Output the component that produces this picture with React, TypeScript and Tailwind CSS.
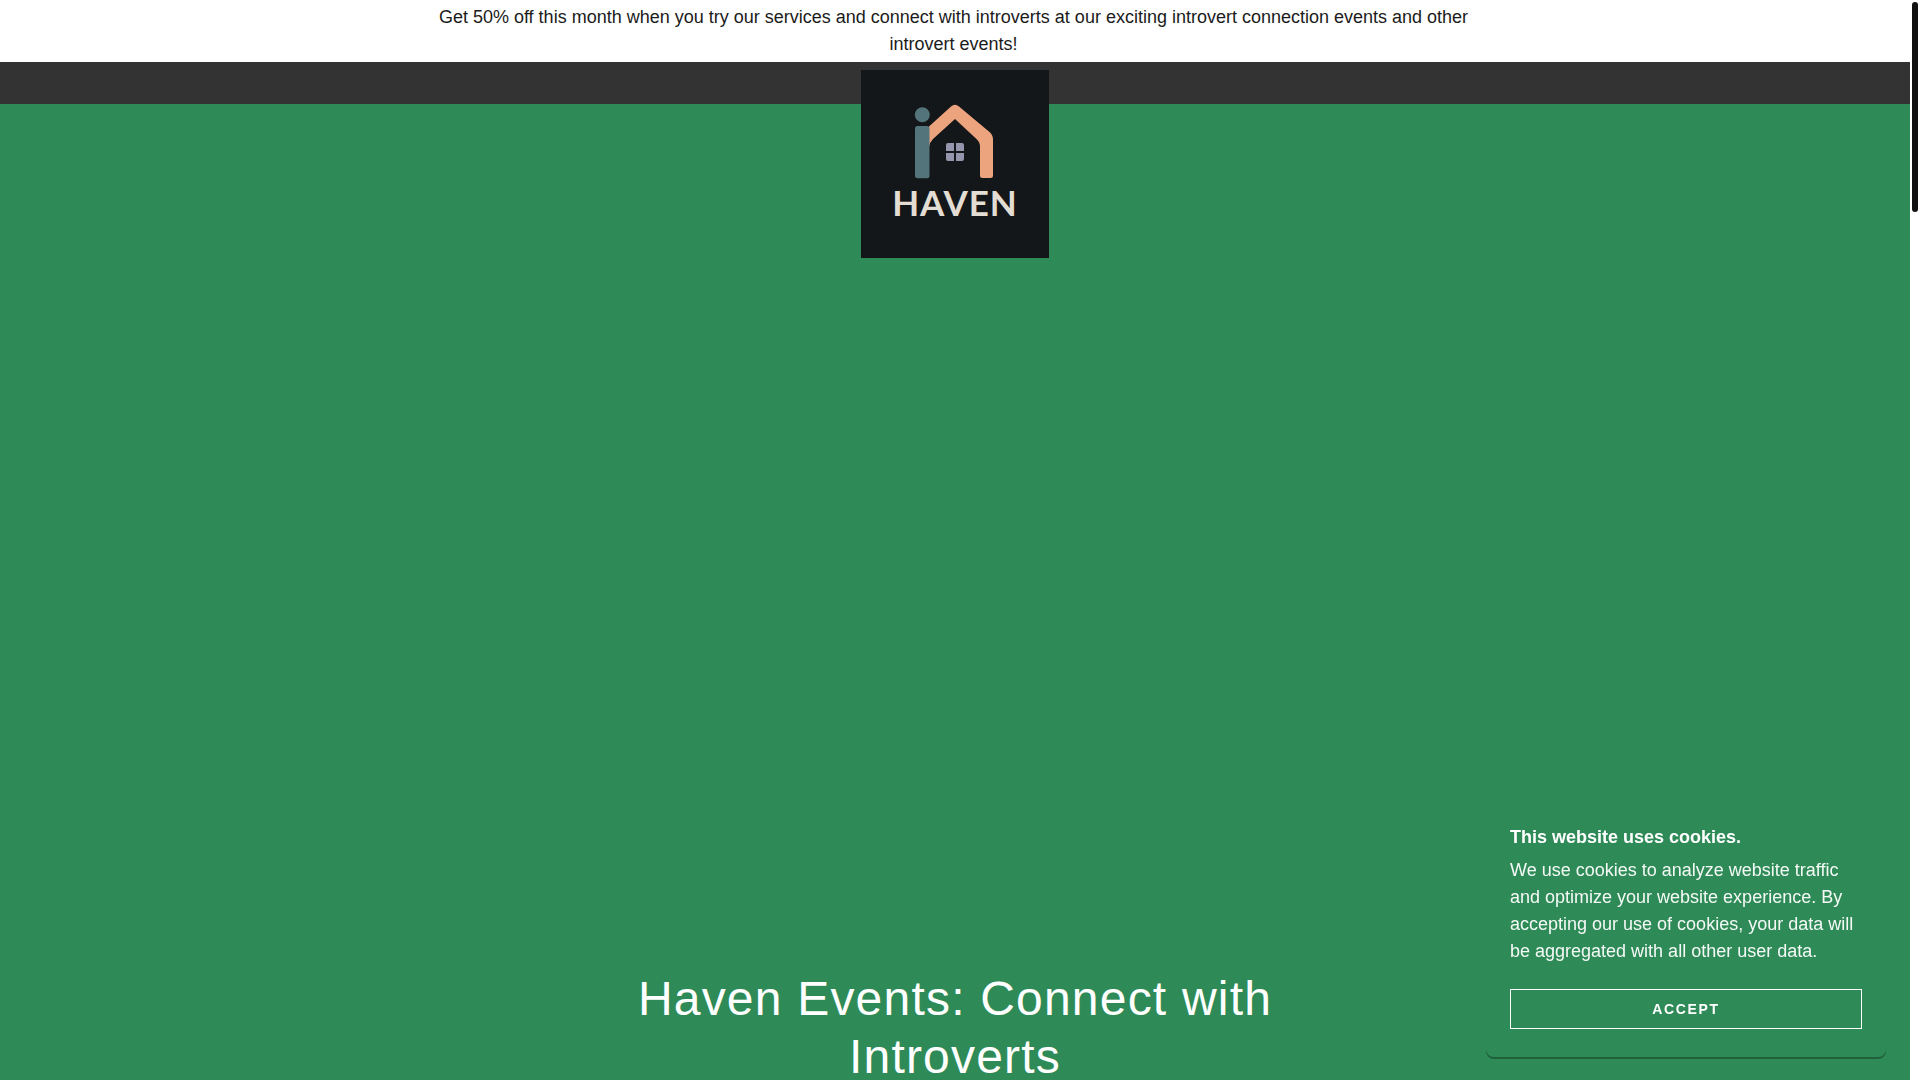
function HavenLogo() {
  return (
    <svg viewBox="0 0 188 188" className="block size-47 shrink-0" role="img" aria-label="Haven">
      <rect width="188" height="188" fill="#141719" />
      <path
        d="M68 73V56.500L90 36.500Q94 33 98 36.500L128.500 62Q132 65 132 69.500V105.500Q132 108 129.500 108H121.500Q119 108 119 105.500V77Q119 72 115.500 69L94 49L72 69Q68.500 72.500 68 77Z"
        fill="#eca47e"
      />
      <circle cx="61.300" cy="44.700" r="7.500" fill="#52747a" />
      <rect x="54" y="56" width="14.500" height="52.300" rx="2.500" fill="#52747a" />
      <g fill="#9795ad">
        <path d="M87 73H93V81H85V75Q85 73 87 73Z" />
        <path d="M95 73H101Q103 73 103 75V81H95Z" />
        <path d="M85 83H93V91H87Q85 91 85 89Z" />
        <path d="M95 83H103V89Q103 91 101 91H95Z" />
      </g>
      <text
        x="94"
        y="146"
        textAnchor="middle"
        fill="#e3ddd3"
        className="font-['Lato',sans-serif] text-[35px] font-bold tracking-[1px]"
      >
        HAVEN
      </text>
    </svg>
  );
}

function CookieNotice() {
  return (
    <section
      aria-labelledby="cookie-title"
      className="fixed right-[34px] bottom-[23px] z-20 w-[400px] rounded-lg bg-[#2e8b57] px-6 pt-6 pb-7 text-lg/[27px] text-white shadow-[0_2px_0_rgba(0,0,0,0.3)]"
    >
      <h2 id="cookie-title" className="mb-1.5 font-bold">
        This website uses cookies.
      </h2>
      <p className="mb-6 text-white/95">
        We use cookies to analyze website traffic and optimize your website experience. By accepting our use of
        cookies, your data will be aggregated with all other user data.
      </p>
      <button
        type="button"
        className="h-10 w-full border border-white text-sm font-bold tracking-[0.12em] uppercase"
      >
        Accept
      </button>
    </section>
  );
}

export default function App() {
  return (
    <div className="flex h-screen overflow-hidden bg-white font-['Liberation_Sans',Arial,sans-serif]">
      <div className="min-w-0 flex-1 overflow-hidden">
        <div className="py-1 pr-[3px]">
          <p className="mx-auto max-w-[1090px] text-center text-lg/[27px] text-[#1b1b1b]">
            Get 50% off this month when you try our services and connect with introverts at our exciting introvert
            connection events and other introvert events!
          </p>
        </div>
        <header className="relative z-10 flex h-[42px] items-start justify-center bg-[#333333] pt-2">
          <a href="#home" className="block">
            <HavenLogo />
          </a>
        </header>
        <main className="bg-[#2e8b57] px-6 pt-[866px] pb-24">
          <h1 className="mx-auto max-w-[780px] text-center text-5xl/[58px] tracking-wide text-white">
            Haven Events: Connect with Introverts
          </h1>
        </main>
      </div>
      <div className="w-2.5 shrink-0 bg-white p-0.5" aria-hidden="true">
        <div className="h-[210px] w-1.5 rounded-full bg-[#111111]" />
      </div>
      <CookieNotice />
    </div>
  );
}
